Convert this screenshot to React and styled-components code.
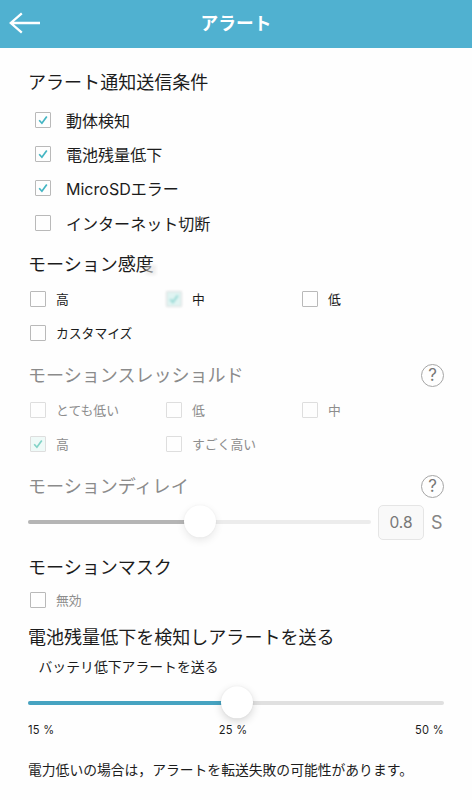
import React from "react";
import styled, { createGlobalStyle } from "styled-components";

const GlobalStyle = createGlobalStyle`
  * {
    box-sizing: border-box;
  }

  body {
    margin: 0;
    background: #fefefe;
    color: #1c1c1c;
    font-family: Inter, "Noto Sans CJK JP", sans-serif;
  }
`;

const Page = styled.div`
  width: 472px;
  height: 800px;
  overflow: hidden;
`;

const Header = styled.header`
  display: grid;
  grid-template-columns: 48px 1fr 48px;
  align-items: center;
  height: 48px;
  background-color: #50b1d0;
`;

const BackButton = styled.button`
  display: flex;
  padding: 0 0 2px 8px;
  border: 0;
  background: none;
`;

const Title = styled.h1`
  margin: 0;
  padding-bottom: 1px;
  color: white;
  font-size: 17.7px;
  line-height: 24px;
  font-weight: 700;
  text-align: center;
`;

const Content = styled.main`
  padding: 17px 28px 0;
`;

const Section = styled.section`
  height: ${({ $height }) => $height}px;
  color: ${({ $muted }) => ($muted ? "#8b8b8b" : "inherit")};
`;

const HeadingRow = styled.div`
  display: flex;
  align-items: center;
  justify-content: space-between;
  height: 34px;
`;

const Heading = styled.h2`
  position: relative;
  margin: 0;
  padding-top: 2px;
  font-size: 18.05px;
  line-height: 26px;
  font-weight: 400;
  white-space: nowrap;
`;

const Smudge = styled.span`
  position: absolute;
  right: -2px;
  bottom: 3px;
  width: 10px;
  height: 10px;
  background: rgba(225, 225, 225, 0.55);
  filter: blur(1.5px);
`;

const List = styled.div`
  display: flex;
  flex-direction: column;
  padding: 3.5px 0 0 7px;
`;

const Grid = styled.div`
  display: grid;
  grid-template-columns: 136px 136px 1fr;
  padding: ${({ $tight }) => ($tight ? 0 : 1)}px 0 0 2px;
  margin-top: ${({ $tight }) => ($tight ? -1 : 0)}px;
`;

const Option = styled.label`
  display: flex;
  align-items: center;
  gap: ${({ $large }) => ($large ? 15 : 10)}px;
  height: 34.3px;
  font-size: ${({ $large }) => ($large ? 16.05 : 12.8)}px;
  line-height: 24px;
  white-space: nowrap;
`;

const OptionText = styled.span`
  padding-top: 2px;
  color: ${({ $muted }) => ($muted ? "#8d8d8d" : "inherit")};
`;

const Box = styled.span`
  display: flex;
  align-items: center;
  justify-content: center;
  flex: none;
  width: 16px;
  height: 16px;
  border: 1px solid ${({ $muted }) => ($muted ? "#dedede" : "#b9b9b9")};
  border-radius: 1px;
  background: ${({ $tint }) => $tint || "#fefefe"};
  filter: ${({ $soft }) => ($soft ? "blur(1.2px)" : "none")};
`;

const HelpButton = styled.button`
  display: flex;
  align-items: center;
  justify-content: center;
  width: 23px;
  height: 23px;
  padding: 0;
  border: 1.5px solid #a5a5a5;
  border-radius: 50%;
  background: none;
  color: #777;
  font-family: Inter, sans-serif;
  font-size: 17px;
  line-height: 20px;
`;

const DelayRow = styled.div`
  display: flex;
  align-items: center;
  height: 38px;
`;

const Slider = styled.div`
  position: relative;
  flex: none;
  width: ${({ $width }) => $width}px;
  height: 4.5px;
  border-radius: 2px;
  background: ${({ $rail }) => $rail};
`;

const Fill = styled.div`
  height: 100%;
  border-radius: 2px;
  background: ${({ $color }) => $color};
`;

const Thumb = styled.div`
  position: absolute;
  top: 50%;
  width: 32px;
  height: 32px;
  border-radius: 50%;
  background: white;
  box-shadow: 0 3px 9px rgba(0, 0, 0, ${({ $shade }) => $shade}), 0 0 2px rgba(0, 0, 0, 0.06);
  transform: translate(-50%, -52%);
`;

const DelayValue = styled.div`
  width: 46px;
  height: 35px;
  margin-left: 7px;
  border: 1.5px solid #e5e5e5;
  border-radius: 5px;
  background: #f9f9f9;
  color: #777;
  font-size: 15.5px;
  line-height: 33px;
  text-align: center;
`;

const Unit = styled.span`
  margin-left: 7px;
  color: #858585;
  font-size: 18px;
`;

const SubLabel = styled.div`
  height: 28px;
  padding-left: 10.5px;
  font-size: 13.85px;
  line-height: 26px;
`;

const AlertSlider = styled.div`
  display: flex;
  align-items: center;
  height: 42px;
`;

const Scale = styled.div`
  display: grid;
  grid-template-columns: 1fr 1fr 1fr;
  height: 14px;
  font-size: 11.1px;
  line-height: 13px;
  letter-spacing: 0.3px;

  span:nth-child(2) {
    padding-right: 6px;
    text-align: center;
  }

  span:nth-child(3) {
    text-align: right;
  }
`;

const Note = styled.p`
  margin: 22px 0 0;
  font-size: 13.8px;
  line-height: 20px;
  white-space: nowrap;
`;

const conditions = [
  { label: "動体検知", checked: true },
  { label: "電池残量低下", checked: true },
  { label: "MicroSDエラー", checked: true },
  { label: "インターネット切断" },
];

const sensitivities = [
  { label: "高" },
  { label: "中", checked: true, soft: true },
  { label: "低" },
  { label: "カスタマイズ" },
];

const thresholds = [
  { label: "とても低い" },
  { label: "低" },
  { label: "中" },
  { label: "高", checked: true },
  { label: "すごく高い" },
];

const CheckOption = ({ label, checked, soft, large, muted, mutedText }) => {
  const stroke = soft ? "#9fdcd8" : muted ? "#82d3c7" : "#43b5c3";
  const tint = soft ? "#e0f4f2" : muted && checked ? "#effaf8" : undefined;

  return (
    <Option $large={large}>
      <Box $muted={muted || soft} $tint={tint} $soft={soft}>
        {checked &&
          <svg width="10" height="10" viewBox="0 0 10 10" fill="none">
            <path d="M1.2 5.2 3.9 8.2 8.8 1.4" stroke={stroke} strokeWidth={soft ? 2.2 : 1.7} />
          </svg>
        }
      </Box>
      <OptionText $muted={muted || mutedText}>{label}</OptionText>
    </Option>
  );
};

const RangeSlider = ({ width, value, rail, color, shade }) => (
  <Slider $width={width} $rail={rail}>
    <Fill $color={color} style={{ width: `${value}%` }} />
    <Thumb $shade={shade} style={{ left: `${value}%` }} />
  </Slider>
);

const App = () => (
  <>
    <GlobalStyle />
    <Page>
      <Header>
        <BackButton aria-label="戻る">
          <svg width="33" height="24" viewBox="0 0 33 24" fill="none" stroke="white" strokeWidth="2.3">
            <path d="M13.8 2.3 2.8 12l11 9.7M2.8 12H32" />
          </svg>
        </BackButton>
        <Title>アラート</Title>
      </Header>
      <Content>
        <Section $height={182}>
          <HeadingRow>
            <Heading>アラート通知送信条件</Heading>
          </HeadingRow>
          <List>
            {conditions.map(item => <CheckOption key={item.label} large {...item} />)}
          </List>
        </Section>
        <Section $height={111}>
          <HeadingRow>
            <Heading>モーション感度<Smudge /></Heading>
          </HeadingRow>
          <Grid>
            {sensitivities.map(item => <CheckOption key={item.label} {...item} />)}
          </Grid>
        </Section>
        <Section $height={111} $muted>
          <HeadingRow>
            <Heading>モーションスレッショルド</Heading>
            <HelpButton>?</HelpButton>
          </HeadingRow>
          <Grid>
            {thresholds.map(item => <CheckOption key={item.label} muted {...item} />)}
          </Grid>
        </Section>
        <Section $height={81} $muted>
          <HeadingRow>
            <Heading>モーションディレイ</Heading>
            <HelpButton>?</HelpButton>
          </HeadingRow>
          <DelayRow>
            <RangeSlider width={343} value={50.2} rail="#ececec" color="#b5b5b5" shade={0.09} />
            <DelayValue>0.8</DelayValue>
            <Unit>S</Unit>
          </DelayRow>
        </Section>
        <Section $height={70}>
          <HeadingRow>
            <Heading>モーションマスク</Heading>
          </HeadingRow>
          <Grid $tight>
            <CheckOption label="無効" mutedText />
          </Grid>
        </Section>
        <Section $height={180}>
          <HeadingRow>
            <Heading>電池残量低下を検知しアラートを送る</Heading>
          </HeadingRow>
          <SubLabel>バッテリ低下アラートを送る</SubLabel>
          <AlertSlider>
            <RangeSlider width={416} value={50.2} rail="#e0e0e0" color="#46a3c1" shade={0.16} />
          </AlertSlider>
          <Scale>
            <span>15 %</span>
            <span>25 %</span>
            <span>50 %</span>
          </Scale>
          <Note>電力低いの場合は，アラートを転送失敗の可能性があります。</Note>
        </Section>
      </Content>
    </Page>
  </>
);

export default App;
